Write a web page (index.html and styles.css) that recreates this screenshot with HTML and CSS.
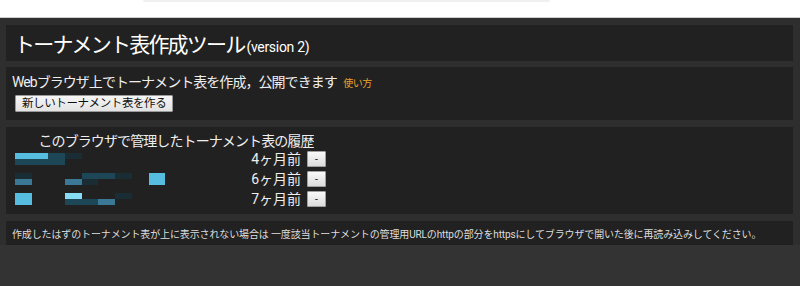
FILE: index.html
```html
<!DOCTYPE html>
<html lang="ja">
<head>
    <meta charset="UTF-8">
    <meta name="viewport" content="width=device-width, initial-scale=1.0">
    <title>トーナメント表作成ツール</title>
    <link rel="stylesheet" href="styles.css">
</head>
<body>

<div class="topbar">
    <div class="search-edge"></div>
</div>

<div class="page">
    <div class="panel title-panel">
        <h1>トーナメント表作成ツール<span class="version">(version 2)</span></h1>
    </div>

    <div class="panel intro">
        <p>Webブラウザ上でトーナメント表を作成，公開できます <a href="#" class="howto">使い方</a></p>
        <button class="new-btn">新しいトーナメント表を作る</button>
    </div>

    <div class="panel history">
        <table class="history-table">
            <caption>このブラウザで管理したトーナメント表の履歴</caption>
            <tbody>
                <tr>
                    <td class="link-cell">
                        <a href="#" class="mosaic">
                            <span class="c1"></span><span class="c1"></span><span class="c3"></span><span class="c4"></span><span></span><span></span><span></span><span></span><span></span>
                            <span class="c3"></span><span class="c3"></span><span class="c3"></span><span></span><span></span><span></span><span></span><span></span><span></span>
                        </a>
                    </td>
                    <td class="date">4ヶ月前</td>
                    <td class="btn-cell"><button class="del-btn">-</button></td>
                </tr>
                <tr>
                    <td class="link-cell">
                        <a href="#" class="mosaic">
                            <span class="c4"></span><span></span><span></span><span></span><span class="c3"></span><span class="c3"></span><span class="c4"></span><span></span><span class="c1"></span>
                            <span class="c2"></span><span></span><span></span><span class="c2"></span><span class="c4"></span><span></span><span></span><span></span><span class="c1"></span>
                        </a>
                    </td>
                    <td class="date">6ヶ月前</td>
                    <td class="btn-cell"><button class="del-btn">-</button></td>
                </tr>
                <tr>
                    <td class="link-cell">
                        <a href="#" class="mosaic">
                            <span class="c1"></span><span></span><span></span><span class="c5"></span><span></span><span></span><span class="c4"></span><span></span><span></span>
                            <span class="c1"></span><span></span><span></span><span class="c3"></span><span class="c3"></span><span class="c2"></span><span></span><span></span><span></span>
                        </a>
                    </td>
                    <td class="date">7ヶ月前</td>
                    <td class="btn-cell"><button class="del-btn">-</button></td>
                </tr>
            </tbody>
        </table>
    </div>

    <div class="panel note">
        <p>作成したはずのトーナメント表が上に表示されない場合は 一度該当トーナメントの管理用URLのhttpの部分をhttpsにしてブラウザで開いた後に再読み込みしてください。</p>
    </div>
</div>

</body>
</html>
```

FILE: styles.css
```css
body {
    font-family: "Roboto", "Noto Sans CJK JP", sans-serif;
    background: #333;
    color: #eee;
    margin: 0;
    padding: 0;
}
.topbar {
    height: 17px;
    background: #fff;
    border-bottom: 1px solid #cfcfcf;
}
.search-edge {
    width: 407px;
    height: 2px;
    margin-left: 143px;
    background: #f0f0f0;
    border-radius: 0 0 2px 2px;
}
.page {
    background: #2e2e2e;
    padding: 7px 7px 0 6px;
    display: flex;
    flex-direction: column;
    gap: 6px;
}
.panel {
    background: #212121;
}
.title-panel {
    height: 36px;
    display: flex;
    align-items: center;
    padding-left: 8px;
}
h1 {
    margin: 0;
    font-size: 21px;
    font-weight: normal;
    letter-spacing: -1.8px;
    color: #fff;
}
.version {
    font-size: 14px;
    letter-spacing: -0.3px;
    margin-left: 2px;
}
.intro {
    height: 53px;
    padding: 7px 0 0 6px;
    box-sizing: border-box;
}
.intro p {
    margin: 0;
    font-size: 14px;
    letter-spacing: -0.95px;
    line-height: 16px;
}
.howto {
    color: #e6a32a;
    text-decoration: none;
    font-size: 10px;
    letter-spacing: -0.6px;
    margin-left: 4px;
}
.new-btn {
    margin: 2px 0 0 3px;
    height: 17px;
    padding: 0 6px;
    font-family: inherit;
    font-size: 11.5px;
    letter-spacing: -0.4px;
    line-height: 15px;
    color: #111;
    background: linear-gradient(#f6f6f6, #e2e2e2);
    border: 1px solid #9a9a9a;
    border-radius: 1px;
}
.history {
    height: 87px;
    padding: 6px 0 0 9px;
    box-sizing: border-box;
    margin-top: 1px;
}
.history-table {
    border-collapse: collapse;
    width: 312px;
}
.history-table caption {
    font-size: 14px;
    letter-spacing: -0.9px;
    line-height: 16px;
    text-align: center;
    padding-left: 10px;
}
.history-table td {
    padding: 0;
    height: 20px;
    line-height: 18px;
}
.mosaic {
    display: grid;
    grid-template-columns: repeat(9, 16.7px);
    grid-template-rows: 6px 6px;
    width: 150px;
}
.mosaic .c1 { background: #56bde0; }
.mosaic .c2 { background: #3a7896; }
.mosaic .c3 { background: #1d4656; }
.mosaic .c4 { background: #1a2c34; }
.mosaic .c5 { background: #86dcf5; }
.history-table .date {
    text-align: right;
    font-size: 14px;
    padding-right: 6px;
    white-space: nowrap;
}
.btn-cell {
    width: 20px;
}
.del-btn {
    display: block;
    width: 19px;
    height: 16px;
    padding: 0;
    font-size: 10px;
    line-height: 14px;
    color: #222;
    background: linear-gradient(#fafafa, #dcdcdc);
    border: 1px solid #a0a0a0;
    border-radius: 1px;
}
.note {
    height: 24px;
    display: flex;
    align-items: center;
    padding-left: 6px;
    margin-top: 1px;
}
.note p {
    margin: 0;
    font-size: 10px;
    letter-spacing: -0.13px;
    color: #ddd;
}
```
